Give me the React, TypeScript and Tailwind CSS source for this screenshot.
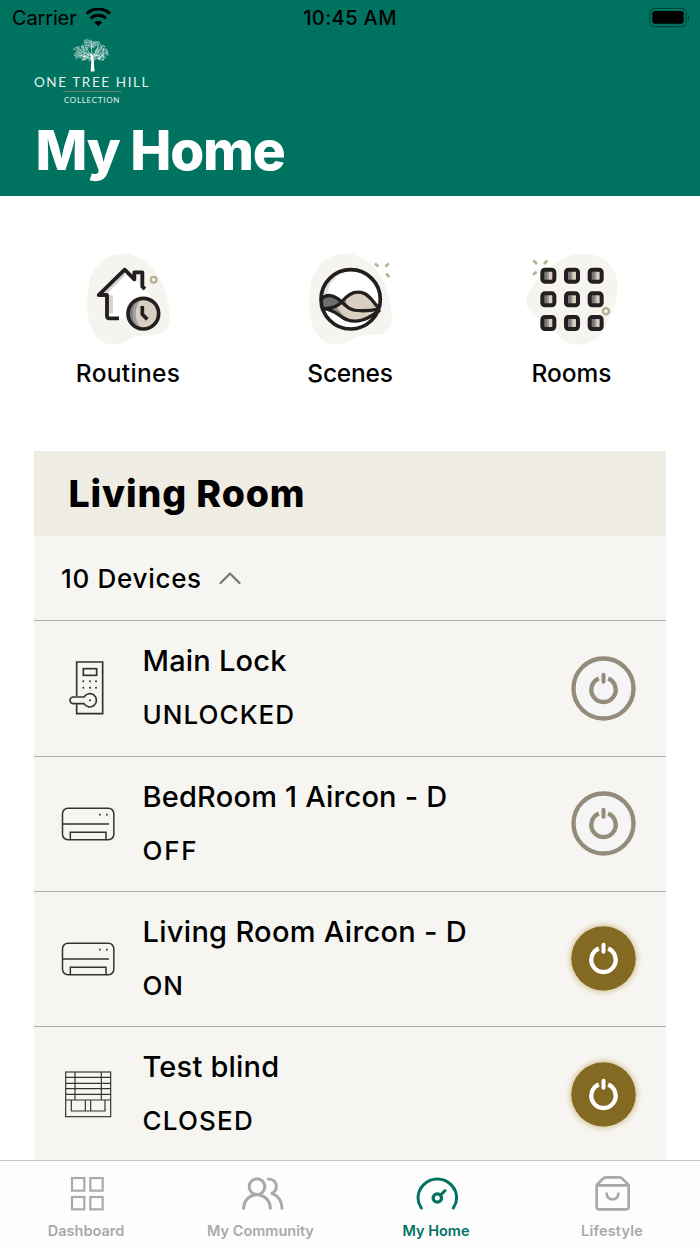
import type { ReactNode } from "react";

type DeviceKind = "lock" | "aircon" | "blind";

type Device = {
  name: string;
  status: string;
  kind: DeviceKind;
  on: boolean;
  nameClass: string;
  statusClass: string;
};

const devices: Device[] = [
  { name: "Main Lock", status: "UNLOCKED", kind: "lock", on: false, nameClass: "tracking-[0.2px]", statusClass: "tracking-[1.05px]" },
  { name: "BedRoom 1 Aircon - D", status: "OFF", kind: "aircon", on: false, nameClass: "tracking-[0.2px]", statusClass: "tracking-[1.7px]" },
  { name: "Living Room Aircon - D", status: "ON", kind: "aircon", on: true, nameClass: "tracking-[0.3px]", statusClass: "tracking-[0.7px]" },
  { name: "Test blind", status: "CLOSED", kind: "blind", on: true, nameClass: "tracking-[0.2px]", statusClass: "tracking-[1.2px]" },
];

// leaves are spread over the canopy with a golden angle spiral
const leaves = Array.from({ length: 86 }, (_, i) => {
  const angle = i * 2.39996;
  const radius = Math.sqrt((i + 8) / 94) * (0.9 + 0.1 * Math.cos(angle * 7));
  return {
    x: 214 + Math.cos(angle) * radius * 57,
    y: 48 + Math.sin(angle) * radius * 33 + (Math.abs(Math.cos(angle)) > 0.6 ? 5 : -2),
    turn: (i * 67) % 180,
  };
});

function TreeLogo() {
  return (
    <svg width="44" height="36" viewBox="150 9 132 108" fill="none" stroke="#fff" strokeLinecap="round">
      <path d="M212 112 L214 74 L210 56 L217 60 L221 74 L224 112Z" fill="#fff" stroke="none" />
      <path
        strokeWidth="1.8"
        d="M217 78 C216 60 204 52 196 34 M217 74 C222 60 232 48 236 30 M216 78 C205 66 190 64 174 62 M218 80 C228 72 244 70 258 54 M215 56 C214 42 216 30 213 20 M234 71 C240 78 246 78 250 76 M200 67 C194 74 190 78 186 78"
      />
      {leaves.map((leaf, i) => (
        <ellipse
          key={i}
          cx={leaf.x}
          cy={leaf.y}
          rx="4.2"
          ry="2.4"
          strokeWidth="1.5"
          opacity="0.75"
          transform={`rotate(${leaf.turn} ${leaf.x} ${leaf.y})`}
        />
      ))}
    </svg>
  );
}

function StatusBar() {
  return (
    <div className="grid h-9 grid-cols-3 items-center text-[20px] leading-none text-black">
      <div className="flex items-center gap-[9px] pl-3">
        <span className="tracking-[-0.15px]">Carrier</span>
        <svg width="26" height="20" viewBox="254 23 78 60" fill="none" stroke="#000" strokeWidth="9">
          <path d="M256 40 A50 50 0 0 1 326 40" />
          <path d="M268 54 A34 34 0 0 1 314 54" />
          <path d="M279 66 A18 18 0 0 1 303 66 L291 78Z" fill="#000" stroke="none" />
        </svg>
      </div>
      <div className="text-center font-medium tracking-[0.4px]">10:45 AM</div>
      <div className="flex justify-end pr-[9px]">
        <svg width="42" height="20" viewBox="1048 23 126 60">
          <rect x="1051" y="24" width="109" height="55" rx="13" fill="none" stroke="#000" strokeWidth="3" opacity="0.45" />
          <rect x="1058" y="32" width="94" height="38" rx="7" />
          <path d="M1165 43 Q1173 51 1165 60Z" opacity="0.5" />
        </svg>
      </div>
    </div>
  );
}

function RoutinesIcon() {
  return (
    <svg width="100" height="100" viewBox="24 24 300 300" fill="none">
      <path
        fill="#f5f4ef"
        d="M155 41 C190 39 228 58 255 92 C280 125 292 165 298 215 C303 255 292 275 270 282 C240 290 215 282 190 293 C165 305 150 316 125 313 C85 310 65 280 55 235 C50 205 50 175 57 130 C65 90 95 45 155 41Z"
      />
      <path fill="#fff" d="M86 164 L164 88 L240 164 V235 H111 V164Z" />
      <path fill="#d6d2cd" d="M111 168 V160 L164 108 V96 L94 162Z M115 166 H129 V220 H115Z" />
      <path
        d="M147 235 H119 Q111 235 111 227 V165 H86 L164 89 L193 118 V97 H217 V140 L225 147"
        stroke="#231f20"
        strokeWidth="11.500"
        strokeLinejoin="round"
      />
      <circle cx="220" cy="221" r="46" fill="#d9cfc1" />
      <path fill="#a19e9b" d="M220 175 A46 46 0 0 0 220 267 C190 252 190 190 220 175Z" />
      <path fill="#77787a" d="M208 177 A46 46 0 0 0 208 265 C180 245 180 197 208 177Z" />
      <circle cx="220" cy="221" r="46" stroke="#231f20" strokeWidth="11" />
      <path d="M217 198 V223 L232 238" stroke="#231f20" strokeWidth="11" />
      <circle cx="251" cy="119" r="8.500" fill="#fff" stroke="#b9af92" strokeWidth="7" />
    </svg>
  );
}

function ScenesIcon() {
  return (
    <svg width="100" height="100" viewBox="30 24 300 300" fill="none">
      <path
        fill="#f5f4ef"
        transform="translate(6 0)"
        d="M155 41 C190 39 228 58 255 92 C280 125 292 165 298 215 C303 255 292 275 270 282 C240 290 215 282 190 293 C165 305 150 316 125 313 C85 310 65 280 55 235 C50 205 50 175 57 130 C65 90 95 45 155 41Z"
      />
      <circle cx="182" cy="178" r="89" fill="#fff" />
      <path fill="#e3dfda" d="M95 165 C100 120 140 92 180 91 C140 102 115 130 112 162Z" />
      <path fill="#6d6e71" d="M92 178 C110 160 130 160 155 186 C140 203 120 207 92 205Z" />
      <path fill="#d9cfc1" d="M155 186 C180 155 200 152 222 160 C245 172 252 190 270 206 C240 212 195 216 180 205Z" />
      <path fill="#d9cfc1" d="M105 207 C125 206 142 200 155 188 C178 208 190 213 212 213 L270 210 C255 222 240 234 215 241 C195 245 175 246 155 232Z" />
      <path fill="#6d6e71" opacity="0.7" d="M154 187 L168 173 C165 187 172 198 186 208Z M122 208 L140 201 C150 216 160 228 180 240 C155 238 140 215 122 208Z" />
      <g stroke="#231f20" strokeWidth="10">
        <path d="M93 178 C108 162 130 162 152 183 C175 205 182 212 212 212 C235 213 252 210 270 207" />
        <path d="M93 205 C125 209 142 200 157 184 C180 155 202 152 222 160 C246 172 252 192 268 206" />
        <path d="M100 206 C130 208 145 225 158 233 C175 244 195 246 217 240 C240 234 255 220 270 210" />
        <circle cx="182" cy="178" r="89" strokeWidth="11" />
      </g>
      <path d="M255 70 L265 80 M296 70 L286 80 M288 101 L298 111" stroke="#b9af92" strokeWidth="8" />
    </svg>
  );
}

function RoomsIcon() {
  const columns = [115, 186, 257];
  const rows = [107, 178, 249];
  return (
    <svg width="100" height="100" viewBox="36 24 300 300" fill="none">
      <path
        fill="#f5f4ef"
        d="M225 41 C275 41 318 75 323 132 C326 180 305 215 290 255 C270 300 230 316 195 314 C160 312 145 285 125 262 C112 242 60 230 50 195 C42 160 75 130 100 100 C130 65 175 41 225 41Z"
      />
      {rows.map((y) =>
        columns.map((x) => (
          <g key={`${x}-${y}`}>
            <rect x={x - 14} y={y - 14} width="28" height="28" fill="#d9cdbf" />
            <rect x={x - 14} y={y - 14} width="13" height="28" fill="#77787b" />
            <rect x={x - 3} y={y - 14} width="5" height="28" fill="#a39e99" />
            <rect x={x - 18} y={y - 18} width="36" height="36" rx="8" stroke="#231f20" strokeWidth="12" />
          </g>
        )),
      )}
      <path d="M70 61 L81 72 M112 61 L102 72 M69 104 L80 95" stroke="#b9af92" strokeWidth="8" />
      <circle cx="288" cy="214" r="9" fill="#fff" stroke="#b9af92" strokeWidth="7.500" />
    </svg>
  );
}

function Shortcut({ label, children, labelClass }: { label: string; children: ReactNode; labelClass: string }) {
  return (
    <div className="flex flex-1 flex-col items-center">
      {children}
      <span className={`mt-[10px] text-[24.500px] leading-[31px] font-medium ${labelClass}`}>{label}</span>
    </div>
  );
}

function DeviceIcon({ kind }: { kind: DeviceKind }) {
  if (kind === "lock") {
    return (
      <svg width="54" height="60" viewBox="93 654 162 180" fill="none" stroke="#333" strokeWidth="5">
        <path d="M140 768 V666 H218 V821 H140 V793" />
        <rect x="160" y="686" width="40" height="20" />
        <path d="M162 771 H130 A10 10 0 0 0 130 791 H162 A20 20 0 1 0 162 771Z" />
        <g fill="#333" stroke="none">
          {[724, 743].map((y) => [160, 180, 198].map((x) => <circle key={`${x}-${y}`} cx={x} cy={y} r="3" />))}
          <circle cx="180" cy="781" r="3" />
        </g>
      </svg>
    );
  }
  if (kind === "aircon") {
    return (
      <svg width="54" height="60" viewBox="93 39 162 180" fill="none" stroke="#333" strokeWidth="4.500">
        <rect x="97.500" y="82" width="154" height="94" rx="16" />
        <path d="M98 129 H237 M121 176 V154 H228 V176" />
        <path d="M207 101 H212 M228 101 H233" strokeWidth="5" />
      </svg>
    );
  }
  return (
    <svg width="54" height="60" viewBox="93 99 162 180" fill="none" stroke="#333" strokeWidth="3.500">
      <rect x="107" y="123" width="135" height="134" />
      <path d="M107 139 H242 M107 157 H242 M107 173 H242 M107 190 H242 M107 207 H242" />
      <path d="M135 123 V207 M214 123 V207 M124 207 V240 H225 V207 M166 207 V240 M182 207 V240" />
    </svg>
  );
}

function PowerButton({ on }: { on: boolean }) {
  const glyph = on ? "#ffffff" : "#948b7b";
  return (
    <button type="button" className={`h-[65px] w-[65px] rounded-full ${on ? "shadow-[0_0_6px_0_#c9ab6a]" : ""}`}>
      <svg width="65" height="65" viewBox="-97.500 -97.500 195 195" fill="none">
        <circle r={on ? 97 : 90} fill={on ? "#846922" : "#f5f5f6"} stroke={on ? "none" : glyph} strokeWidth="13" />
        <path d="M14 -29.700 A36.500 36.500 0 1 1 -14 -29.700" stroke={glyph} strokeWidth="13" />
        <path d="M0 -41 V-20" stroke={glyph} strokeWidth="12" strokeLinecap="round" />
      </svg>
    </button>
  );
}

function DeviceRow({ device }: { device: Device }) {
  return (
    <li className="flex h-[135.200px] shrink-0 items-center border-t border-[#adadad] pr-[30px]">
      <div className="flex w-[108px] justify-center">
        <DeviceIcon kind={device.kind} />
      </div>
      <div className="flex-1 pl-[0.500px] font-medium whitespace-nowrap">
        <p className={`text-[29px] leading-[54px] ${device.nameClass}`}>{device.name}</p>
        <p className={`text-[26px] leading-[54px] ${device.statusClass}`}>{device.status}</p>
      </div>
      <PowerButton on={device.on} />
    </li>
  );
}

function TabItem({ label, active, labelClass, viewBox, children }: { label: string; active?: boolean; labelClass: string; viewBox: string; children: ReactNode }) {
  return (
    <div className={`flex flex-1 flex-col items-center pt-[11px] ${active ? "text-[#007260]" : "text-[#a9a9a9]"}`}>
      <svg width="44" height="44" viewBox={viewBox} fill="none" stroke="currentColor" strokeWidth="9" strokeLinecap="round" strokeLinejoin="round">
        {children}
      </svg>
      <span className={`mt-[5px] text-[14.500px] leading-[20px] font-semibold ${labelClass}`}>{label}</span>
    </div>
  );
}

export default function App() {
  return (
    <div className="flex h-[1244px] w-[700px] flex-col overflow-hidden bg-white font-['Inter','Liberation_Sans',sans-serif] text-black">
      <header className="h-[196px] shrink-0 bg-[#007260] text-white">
        <StatusBar />
        <div className="ml-[32px] flex h-[70px] w-[120px] flex-col items-center pt-[2px] font-['Lato',sans-serif]">
          <TreeLogo />
          <span className="mt-[1px] text-[13.500px] leading-[17px] tracking-[1.600px] whitespace-nowrap opacity-90">ONE TREE HILL</span>
          <span className="h-px w-[59px] bg-[#5f7f6c]" />
          <span className="mt-[2px] text-[8px] leading-[12px] tracking-[0.700px] opacity-90">COLLECTION</span>
        </div>
        <h1 className="mt-[14px] pl-[35.500px] text-[55px] leading-[60px] font-extrabold tracking-[-1.250px]">My Home</h1>
      </header>

      <section className="flex h-[255px] shrink-0 px-[17px] pt-[52px]">
        <Shortcut label="Routines" labelClass="tracking-[0.300px]">
          <RoutinesIcon />
        </Shortcut>
        <Shortcut label="Scenes" labelClass="tracking-[-0.200px]">
          <ScenesIcon />
        </Shortcut>
        <Shortcut label="Rooms" labelClass="pr-[1px]">
          <RoomsIcon />
        </Shortcut>
      </section>

      <section className="mx-[34px] flex min-h-0 flex-1 flex-col overflow-hidden bg-[#f6f5f1]">
        <h2 className="h-[85px] shrink-0 bg-[#efece4] pl-[34.500px] text-[37.500px] leading-[85px] font-extrabold tracking-[0.900px]">Living Room</h2>
        <div className="flex h-[84.400px] shrink-0 items-center gap-[17.500px] pl-[27px]">
          <span className="text-[26px] font-medium tracking-[0.700px]">10 Devices</span>
          <svg width="22" height="14" viewBox="0 0 22 14" fill="none" stroke="#777" strokeWidth="2.200" strokeLinecap="round" strokeLinejoin="round">
            <path d="M1.500 12 L11 2.500 L20.500 12" />
          </svg>
        </div>
        <ul>
          {devices.map((device) => (
            <DeviceRow key={device.name} device={device} />
          ))}
        </ul>
      </section>

      <nav className="flex h-[84px] shrink-0 border-t border-[#c4c4c4] bg-[#fdfdfd]">
        <TabItem label="Dashboard" labelClass="pr-[3px]" viewBox="108 427 132 132">
          <g strokeWidth="6.500" strokeLinejoin="miter">
            <rect x="126" y="445" width="37" height="38" />
            <rect x="181" y="445" width="37" height="38" />
            <rect x="126" y="502" width="37" height="37" />
            <rect x="181" y="502" width="37" height="37" />
          </g>
        </TabItem>
        <TabItem label="My Community" labelClass="pr-[4px]" viewBox="182 67 132 132">
          <circle cx="230" cy="111" r="23.500" />
          <path d="M190 176 C190 153 208 135 230 135 S270 153 270 176 M264 88 C279 88 288 98 288 110 S282 128 275 131 C293 138 305 155 305 176" />
        </TabItem>
        <TabItem label="My Home" active labelClass="pr-[3px]" viewBox="707 67 132 132">
          <path d="M723 175 C715 163 713 155 713 146 A58 58 0 0 1 829 146 C829 155 827 163 819 175" />
          <circle cx="771" cy="145" r="12.500" strokeWidth="10" />
          <path d="M781 136 L794 123" />
        </TabItem>
        <TabItem label="Lifestyle" labelClass="pr-[1px] tracking-[0.200px]" viewBox="1232 67 132 132">
          <path strokeWidth="8" d="M1249 106 L1267 88 Q1271 83 1277 83 H1317 Q1323 83 1327 88 L1345 106 V171 Q1345 179 1337 179 H1257 Q1249 179 1249 171Z M1249 107 H1345 M1279 132 C1280 155 1313 155 1314 132" />
        </TabItem>
      </nav>
    </div>
  );
}
